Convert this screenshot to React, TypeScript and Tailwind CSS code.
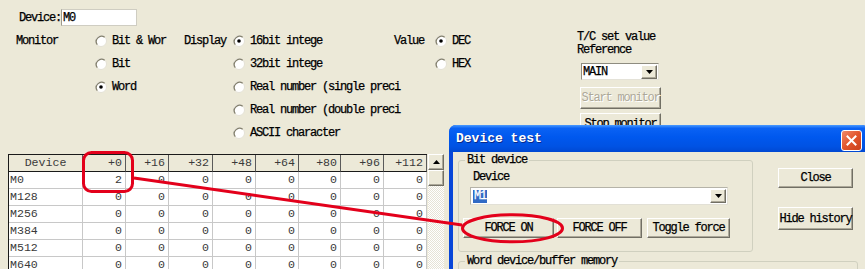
import React from "react";

const BTN =
  "flex items-center justify-center bg-[#ECE9D8] border border-t-white border-l-white border-r-[#716F64] border-b-[#716F64] shadow-[inset_-1px_-1px_0_#ACA899]";

function Radio({ checked }: { checked?: boolean }) {
  return (
    <svg width="12" height="12" viewBox="0 0 12 12" className="shrink-0">
      <circle cx="6" cy="6" r="5.5" fill="#fff" stroke="#E4E1D6" strokeWidth="1" />
      <path d="M2.3 9.7 A5.3 5.3 0 0 1 9.7 2.3" fill="none" stroke="#85826F" strokeWidth="1.3" />
      {checked && <circle cx="6" cy="6" r="1.8" fill="#000" />}
    </svg>
  );
}

function RadioRow({ label, checked }: { label: string; checked?: boolean }) {
  return (
    <div className="h-[23px] flex items-center gap-[5px] whitespace-nowrap">
      <Radio checked={checked} />
      <span>{label}</span>
    </div>
  );
}

function DropBtn() {
  return (
    <div className={"w-[16px] h-[14px] shrink-0 " + BTN}>
      <svg width="7" height="4" viewBox="0 0 7 4">
        <path d="M0 0H7L3.5 4Z" fill="#000" />
      </svg>
    </div>
  );
}

const COLS = [74, 43, 43, 44, 43, 43, 42, 43, 43];
const HEAD = ["Device", "+0", "+16", "+32", "+48", "+64", "+80", "+96", "+112"];
const ROWS = ["M0", "M128", "M256", "M384", "M512", "M640"];

export default function App() {
  return (
    <div className="relative w-[865px] h-[269px] overflow-hidden bg-[#ECE9D8] font-['Liberation_Mono',monospace] text-[12px] tracking-[-1.2px] text-black leading-none">
      <div className="[-webkit-text-stroke:0.25px_#000]">
        {/* Device row */}
        <div className="flex items-center h-[17px] mt-[9px] ml-[19px]">
          <span className="w-[42px]">Device:</span>
          <div className="w-[76px] h-[17px] bg-white border border-[#CFCDC2] border-l-[#9C9A8E] flex items-center pl-[1px]">
            M0
          </div>
        </div>

        {/* options */}
        <div className="flex mt-[3px] h-[125px]">
          <div className="w-[79px] ml-[16px] h-[23px] flex items-center">Monitor</div>
          <div className="w-[89px] flex flex-col">
            <RadioRow label="Bit & Wor" />
            <RadioRow label="Bit" />
            <RadioRow label="Word" checked />
          </div>
          <div className="w-[49px] h-[23px] flex items-center">Display</div>
          <div className="w-[161px] flex flex-col">
            <RadioRow label="16bit intege" checked />
            <RadioRow label="32bit intege" />
            <RadioRow label="Real number (single preci" />
            <RadioRow label="Real number (double preci" />
            <RadioRow label="ASCII character" />
          </div>
          <div className="w-[41px] h-[23px] flex items-center">Value</div>
          <div className="w-[142px] flex flex-col">
            <RadioRow label="DEC" checked />
            <RadioRow label="HEX" />
          </div>
          <div className="flex flex-col">
            <div className="mt-[2px] leading-[13px]">
              <div>T/C set value</div>
              <div>Reference</div>
            </div>
            <div className="mt-[6px] ml-[4px] w-[78px] h-[17px] bg-white border border-t-[#8E8C80] border-l-[#8E8C80] border-r-[#E4E2D8] border-b-[#E4E2D8] flex items-center justify-between pl-[1px] pr-[1px]">
              <span>MAIN</span>
              <DropBtn />
            </div>
            <div className={"mt-[7px] ml-[3px] w-[81px] h-[22px] text-[#ACA899] [-webkit-text-stroke:0px] [text-shadow:1px_1px_0_#fff] " + BTN}>
              Start monitor
            </div>
            <div className={"mt-[4px] ml-[3px] w-[81px] h-[22px] " + BTN}>Stop monitor</div>
          </div>
        </div>
      </div>

      {/* table */}
      <div className="flex ml-[8px] tracking-normal">
        <div className="flex flex-col border-l border-t border-[#1A1A1A] font-['Liberation_Mono',monospace] text-[11.6px] text-[#3A3A3A]">
          <div className="flex h-[17px]">
            {HEAD.map((h, i) => (
              <div
                key={h}
                style={{ width: COLS[i] }}
                className={
                  "h-[17px] bg-[#ECE9D8] border-r border-b border-r-[#5A5A5A] border-b-[#1A1A1A] flex items-center " +
                  (i === 0 ? "justify-center" : "justify-end pr-[3px]")
                }
              >
                {h}
              </div>
            ))}
          </div>
          {ROWS.map((r, ri) => (
            <div key={r} className="flex h-[17px] bg-white">
              {COLS.map((w, i) => (
                <div
                  key={i}
                  style={{ width: w }}
                  className={
                    "h-[17px] border-r border-b border-[#C8C8C8] flex items-center " +
                    (i === 0 ? "justify-start pl-[1px]" : "justify-end pr-[3px]")
                  }
                >
                  {i === 0 ? r : ri === 0 && i === 1 ? "2" : "0"}
                </div>
              ))}
            </div>
          ))}
        </div>
        <div className="ml-[1px] w-[16px] flex flex-col h-[120px]">
          <div className={"w-[16px] h-[16px] " + BTN}>
            <svg width="7" height="4" viewBox="0 0 7 4">
              <path d="M0 4H7L3.5 0Z" fill="#000" />
            </svg>
          </div>
          <div className={"w-[16px] h-[16px] " + BTN}></div>
          <div className="flex-1 bg-[repeating-conic-gradient(#ffffff_0_25%,#E6E3D6_0_50%)] bg-[length:2px_2px]"></div>
        </div>
      </div>

      {/* Device test dialog */}
      <div className="absolute left-[449px] top-[125px] w-[420px] h-[160px] rounded-t-[7px] bg-[#0846D8] overflow-hidden flex flex-col">
        <div className="relative h-[27px] shrink-0 bg-[linear-gradient(to_bottom,#4A9BFF_0%,#0A62F4_12%,#0058EE_45%,#0052E3_80%,#0048D2_100%)] flex items-center pl-[7px]">
          <span className="font-['Liberation_Mono',monospace] font-bold text-[13px] tracking-normal text-white [text-shadow:1px_1px_0_#0A2A8A]">
            Device test
          </span>
          <div className="absolute left-[392px] top-[5px] w-[21px] h-[21px] rounded-[3px] border border-white bg-[linear-gradient(135deg,#F08A6A_0%,#E2552C_50%,#C9401A_100%)] flex items-center justify-center">
            <svg width="11" height="11" viewBox="0 0 11 11">
              <path d="M1.5 1.5L9.5 9.5M9.5 1.5L1.5 9.5" stroke="#fff" strokeWidth="2" strokeLinecap="square" />
            </svg>
          </div>
        </div>
        <div className="flex-1 ml-[4px] bg-[#ECE9D8] flex flex-col [-webkit-text-stroke:0.25px_#000]">
          <div className="flex">
            <fieldset className="ml-[5px] mt-[2px] w-[295px] h-[98px] border border-[#D0D0BF] rounded-[3px] flex flex-col">
              <legend className="ml-[6px] px-[2px] leading-[13px]">Bit device</legend>
              <div className="mt-[4px] ml-[14px] leading-[13px]">Device</div>
              <div className="mt-[3px] ml-[11px] w-[258px] h-[18px] bg-white border border-[#B5B3A8] border-r-[#E2E0D6] border-b-[#E2E0D6] flex items-center justify-between pl-[2px] pr-[1px]">
                <span className="bg-[#316AC5] text-white [-webkit-text-stroke:0.25px_#fff] px-[1px] h-[13px] flex items-center">M1</span>
                <DropBtn />
              </div>
              <div className="flex mt-[13px] ml-[4px]">
                <div className={"w-[91px] h-[20px] " + BTN}>FORCE ON</div>
                <div className={"ml-[3px] w-[85px] h-[20px] " + BTN}>FORCE OFF</div>
                <div className={"ml-[5px] w-[83px] h-[20px] " + BTN}>Toggle force</div>
              </div>
            </fieldset>
            <div className="ml-[25px] mt-[16px] flex flex-col gap-[19px]">
              <div className={"w-[75px] h-[20px] " + BTN}>Close</div>
              <div className={"w-[75px] h-[23px] " + BTN}>Hide history</div>
            </div>
          </div>
          <fieldset className="ml-[5px] mt-[3px] w-[400px] h-[40px] border border-[#D0D0BF] rounded-[3px]">
            <legend className="ml-[6px] px-[2px] leading-[13px]">Word device/buffer memory</legend>
          </fieldset>
        </div>
      </div>

      {/* red annotations */}
      <svg className="absolute left-0 top-0 pointer-events-none" width="865" height="269" viewBox="0 0 865 269">
        <rect x="83.5" y="152.5" width="49" height="39" rx="8" fill="none" stroke="#E3001B" strokeWidth="3" />
        <path d="M134 178 L462 225" stroke="#E3001B" strokeWidth="3" fill="none" />
        <ellipse cx="512.5" cy="228.3" rx="50" ry="13.5" fill="none" stroke="#E3001B" strokeWidth="3" />
      </svg>
    </div>
  );
}
